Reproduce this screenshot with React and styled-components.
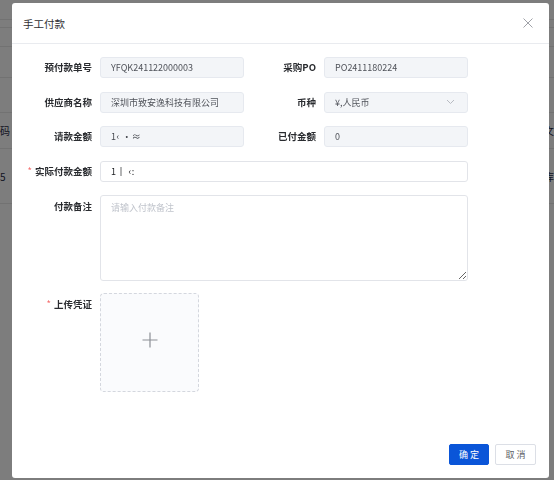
import styled, { createGlobalStyle } from "styled-components";

const GlobalStyle = createGlobalStyle`
  html, body {
    margin: 0;
    padding: 0;
    width: 554px;
    height: 480px;
    overflow: hidden;
    font-family: "Noto Sans CJK SC", "Noto Sans", sans-serif;
  }
`;

const bgRows = [
  { h: 20, left: "", right: "" },
  { h: 8, left: "", right: "" },
  { h: 19, left: "", right: "" },
  { h: 31, left: "", right: "" },
  { h: 35, left: "", right: "" },
  { h: 36, left: "码", right: "文" },
  { h: 55, left: "5", right: "库" },
];

const App = () => {
  return (
    <>
      <GlobalStyle />
      <Page>
        {bgRows.map((r, i) => (
          <BgRow key={i} style={{ height: r.h }}>
            <span>{r.left}</span>
            <span>{r.right}</span>
          </BgRow>
        ))}
      </Page>
      <Mask>
        <Dialog>
          <Header>
            <Title>手工付款</Title>
            <Close aria-label="close">
              <svg width="10" height="10" viewBox="0 0 10 10">
                <path d="M0.5 0.5L9.5 9.5M9.5 0.5L0.5 9.5" stroke="#a0a2a8" strokeWidth="1" fill="none" />
              </svg>
            </Close>
          </Header>
          <Body>
            <Row>
              <Field>
                <Label>预付款单号</Label>
                <Input $disabled>YFQK241122000003</Input>
              </Field>
              <Field>
                <Label>采购PO</Label>
                <Input $disabled>PO2411180224</Input>
              </Field>
            </Row>
            <Row>
              <Field>
                <Label>供应商名称</Label>
                <Input $disabled>深圳市致安逸科技有限公司</Input>
              </Field>
              <Field>
                <Label>币种</Label>
                <Input $disabled>
                  ¥,人民币
                  <Chevron width="9" height="6" viewBox="0 0 9 6">
                    <path d="M1 1L4.5 4.5L8 1" stroke="#b8bbc2" strokeWidth="1" fill="none" />
                  </Chevron>
                </Input>
              </Field>
            </Row>
            <Row>
              <Field>
                <Label>请款金额</Label>
                <Input $disabled>
                  <Masked>1‹ ·≈</Masked>
                </Input>
              </Field>
              <Field>
                <Label>已付金额</Label>
                <Input $disabled>0</Input>
              </Field>
            </Row>
            <Row>
              <Field $wide>
                <Label $required>实际付款金额</Label>
                <Input>
                  <Masked $dark>1‖ ‹:</Masked>
                </Input>
              </Field>
            </Row>
            <Row $top>
              <Field $wide>
                <Label $top>付款备注</Label>
                <TextArea placeholder="请输入付款备注" />
              </Field>
            </Row>
            <Row $top $gap={12}>
              <Field>
                <Label $top $required>上传凭证</Label>
                <Upload>
                  <svg width="16" height="16" viewBox="0 0 16 16">
                    <path d="M8 0.5V15.5M0.5 8H15.5" stroke="#8c8f96" strokeWidth="1.2" fill="none" />
                  </svg>
                </Upload>
              </Field>
            </Row>
          </Body>
          <Footer>
            <Button $primary>确定</Button>
            <Button>取消</Button>
          </Footer>
        </Dialog>
      </Mask>
    </>
  );
};

export default App;

const Page = styled.div`
  width: 554px;
  height: 480px;
  background: #fbfbfb;
  display: flex;
  flex-direction: column;
`;

const BgRow = styled.div`
  display: flex;
  justify-content: space-between;
  align-items: center;
  border-bottom: 1px solid #e4e4e4;
  font-size: 10px;
  color: #1f2a44;
  box-sizing: border-box;
`;

const Mask = styled.div`
  position: fixed;
  inset: 0;
  background: rgba(0, 0, 0, 0.5);
  padding: 3px 5px 2px 12px;
  box-sizing: border-box;
`;

const Dialog = styled.div`
  width: 537px;
  height: 475px;
  background: #fff;
  border-radius: 3px;
  display: flex;
  flex-direction: column;
  box-sizing: border-box;
`;

const Header = styled.div`
  height: 41px;
  border-bottom: 1px solid #e9ebef;
  display: flex;
  align-items: center;
  justify-content: space-between;
  padding: 0 16px 0 11px;
  box-sizing: border-box;
`;

const Title = styled.div`
  font-size: 10.5px;
  color: #303133;
`;

const Close = styled.div`
  display: flex;
  align-items: center;
`;

const Body = styled.div`
  flex: 1;
  padding: 13px 0 0 8px;
  display: flex;
  flex-direction: column;
`;

const Row = styled.div`
  display: flex;
  align-items: ${(p) => (p.$top ? "flex-start" : "center")};
  margin-bottom: ${(p) => (p.$gap !== undefined ? 0 : 13.5)}px;
  margin-top: ${(p) => (p.$gap !== undefined ? p.$gap - 13.5 : 0)}px;
`;

const Field = styled.div`
  display: flex;
  align-items: flex-start;
  width: ${(p) => (p.$wide ? "448px" : "224px")};
`;

const Label = styled.div`
  width: 80px;
  flex-shrink: 0;
  padding-right: 8px;
  box-sizing: border-box;
  text-align: right;
  font-size: 9.5px;
  font-weight: 700;
  line-height: 21px;
  color: #2a2c30;
  white-space: nowrap;
  padding-top: ${(p) => (p.$top ? "1px" : "0")};
  &::before {
    content: ${(p) => (p.$required ? '"*"' : "none")};
    color: #f56c6c;
    font-weight: 400;
    margin-right: 3px;
  }
`;

const Input = styled.div`
  flex: 1;
  height: 21px;
  border: 1px solid ${(p) => (p.$disabled ? "#e6e9ef" : "#e2e4e9")};
  background: ${(p) => (p.$disabled ? "#f3f5f8" : "#fff")};
  border-radius: 3px;
  box-sizing: border-box;
  padding: 0 12px 0 10px;
  font-size: 9px;
  color: #50535a;
  display: flex;
  align-items: center;
  justify-content: space-between;
  white-space: nowrap;
`;

const Masked = styled.span`
  color: ${(p) => (p.$dark ? "#202225" : "#45484f")};
  filter: blur(0.4px);
  letter-spacing: 0.5px;
`;

const Chevron = styled.svg`
  display: block;
`;

const TextArea = styled.textarea`
  flex: 1;
  height: 86px;
  border: 1px solid #e2e4e9;
  border-radius: 3px;
  padding: 5px 10px;
  box-sizing: border-box;
  font-family: inherit;
  font-size: 9px;
  color: #50535a;
  resize: vertical;
  outline: none;
  &::placeholder {
    color: #c0c4cc;
  }
`;

const Upload = styled.div`
  width: 99px;
  height: 99px;
  border: 1px dashed #d4d7de;
  border-radius: 4px;
  background: #fafbfd;
  box-sizing: border-box;
  display: flex;
  align-items: center;
  justify-content: center;
  padding-bottom: 6px;
`;

const Footer = styled.div`
  display: flex;
  justify-content: flex-end;
  gap: 6px;
  padding: 0 13px 13px 0;
`;

const Button = styled.button`
  width: ${(p) => (p.$primary ? "40px" : "41px")};
  height: 21px;
  border-radius: 2px;
  border: 1px solid ${(p) => (p.$primary ? "#0a55d8" : "#dcdfe6")};
  background: ${(p) => (p.$primary ? "#0a55d8" : "#fff")};
  color: ${(p) => (p.$primary ? "#fff" : "#606266")};
  font-family: inherit;
  font-size: 9px;
  padding: 0;
  letter-spacing: 2px;
  text-indent: 2px;
  cursor: pointer;
`;
